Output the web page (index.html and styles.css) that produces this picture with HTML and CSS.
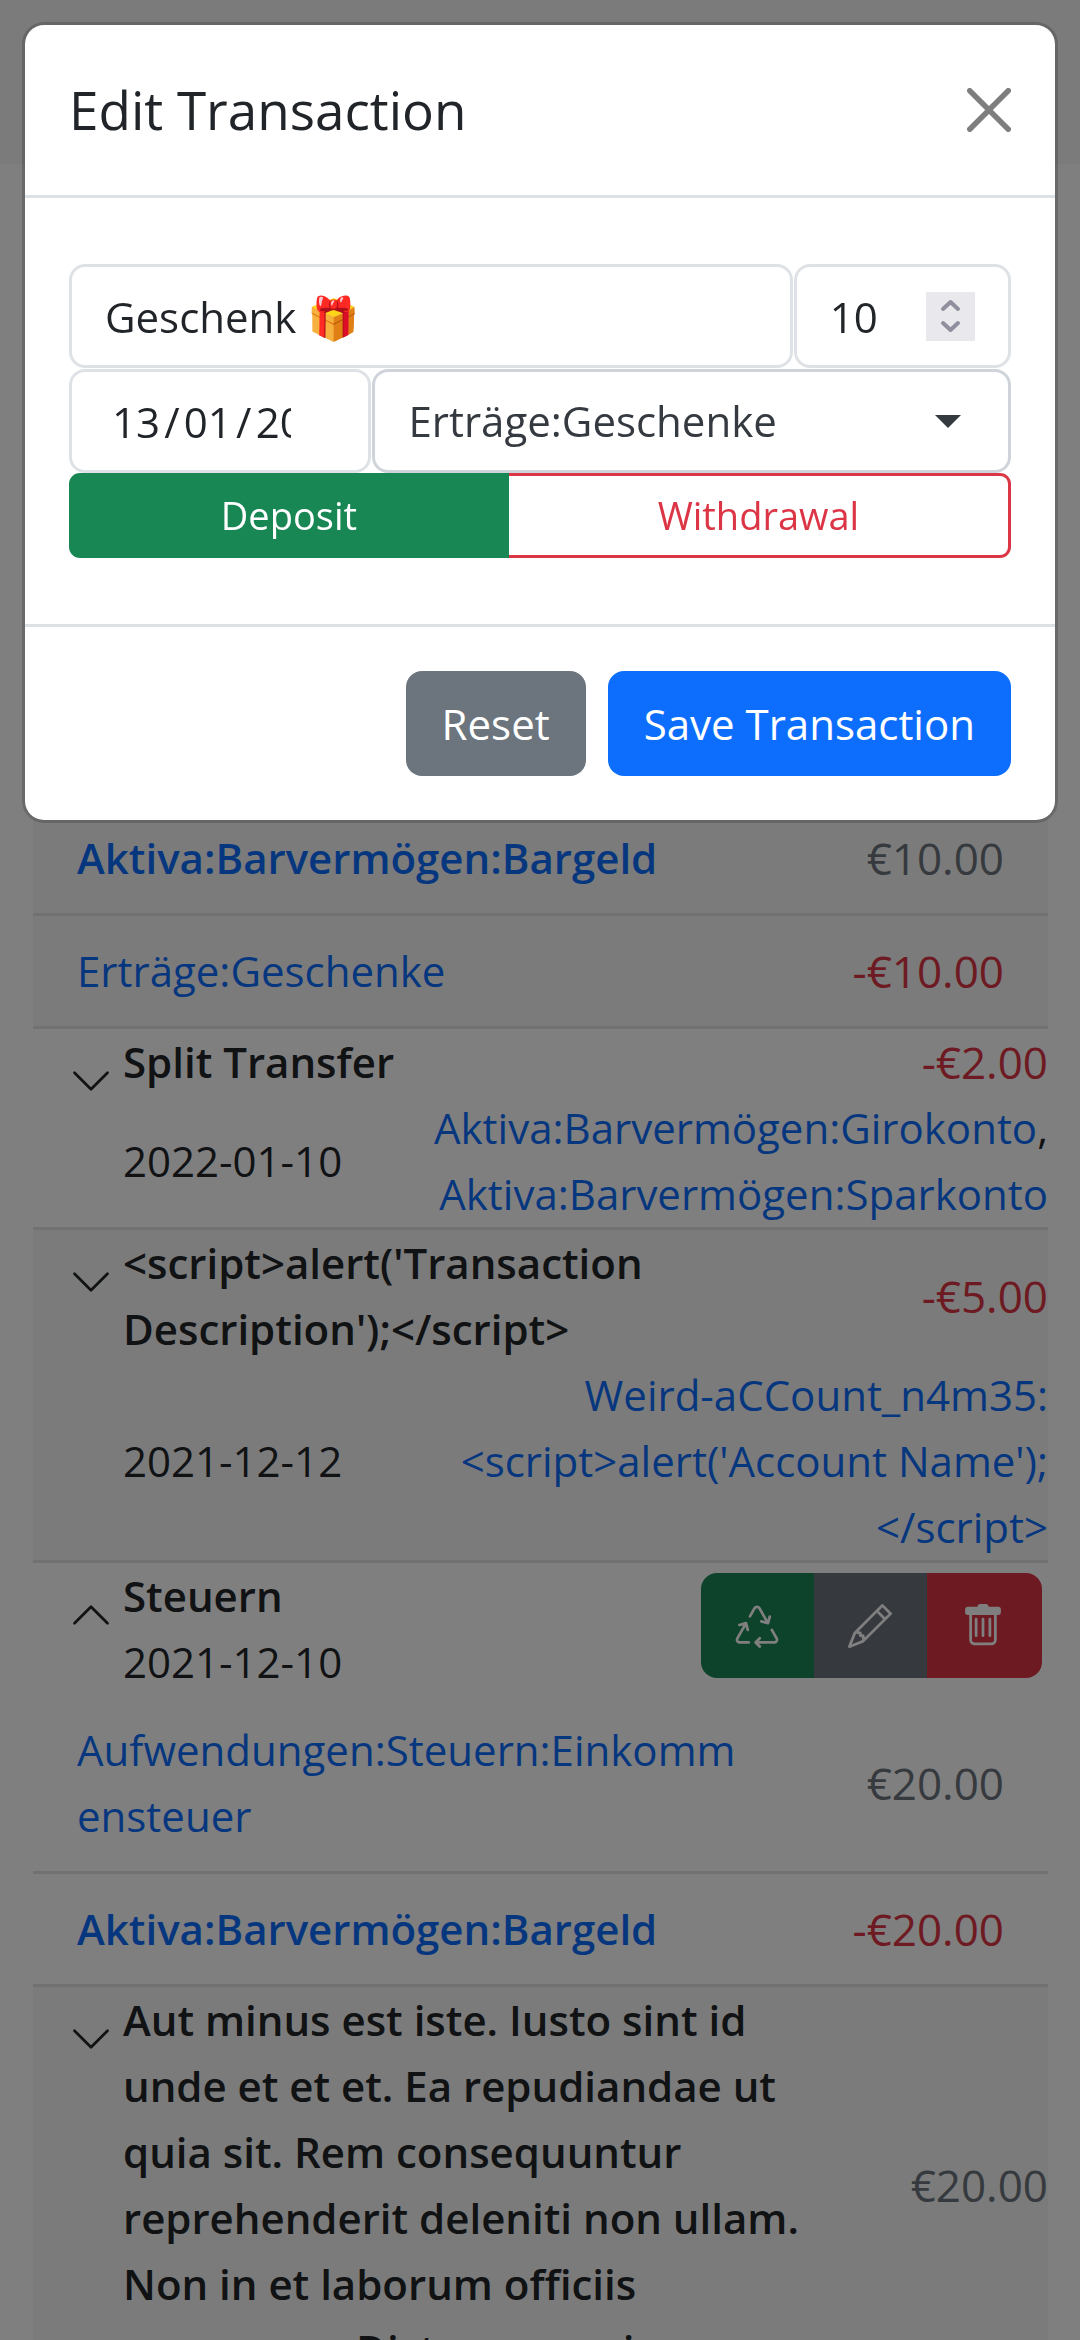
FILE: index.html
```html
<!DOCTYPE html>
<html lang="en">
<head>
<meta charset="utf-8">
<meta name="viewport" content="width=device-width, initial-scale=1">
<title>Edit Transaction</title>
<link rel="stylesheet" href="styles.css">
</head>
<body>
<div class="page">
  <header class="navbar"></header>
  <main class="ledger">
    <section class="entry entry-first">
      <div class="split">
        <a class="account current" href="#">Aktiva:Barvermögen:Bargeld</a>
        <span class="amount">€10.00</span>
      </div>
      <div class="split">
        <a class="account" href="#">Erträge:Geschenke</a>
        <span class="amount negative">-€10.00</span>
      </div>
    </section>

    <section class="entry">
      <div class="summary">
        <button class="toggle" type="button" aria-label="Expand">
          <svg class="icon" viewBox="0 0 16 16"><path d="M2 5l6 6 6-6"/></svg>
        </button>
        <div class="details">
          <div class="headline"><span class="title">Split Transfer</span><span class="amount negative">-€2.00</span></div>
          <div class="subline"><span>2022-01-10</span><span class="targets"><a href="#">Aktiva:Barvermögen:Girokonto</a>, <a href="#">Aktiva:Barvermögen:Sparkonto</a></span></div>
        </div>
      </div>
    </section>

    <section class="entry">
      <div class="summary">
        <button class="toggle" type="button" aria-label="Expand">
          <svg class="icon" viewBox="0 0 16 16"><path d="M2 5l6 6 6-6"/></svg>
        </button>
        <div class="details">
          <div class="headline"><span class="title">&lt;script&gt;alert('Transaction Description');&lt;/script&gt;</span><span class="amount negative">-€5.00</span></div>
          <div class="subline"><span>2021-12-12</span><span class="targets"><a href="#">Weird-aCCount_n4m35:<wbr>&lt;script&gt;alert('Account&nbsp;Name');<wbr>&lt;/script&gt;</a></span></div>
        </div>
      </div>
    </section>

    <section class="entry">
      <div class="summary">
        <button class="toggle" type="button" aria-label="Collapse">
          <svg class="icon" viewBox="0 0 16 16"><path d="M2 11l6-6 6 6"/></svg>
        </button>
        <div class="details opened">
          <div><div class="title">Steuern</div><div>2021-12-10</div></div>
          <div class="actions">
            <button class="action copy" type="button" aria-label="Copy">
              <svg viewBox="0 0 16 16"><path d="M9.302 1.256a1.5 1.5 0 0 0-2.604 0l-1.704 2.98a.5.5 0 0 0 .869.497l1.703-2.981a.5.5 0 0 1 .868 0l2.54 4.444-1.256-.337a.5.5 0 1 0-.26.966l2.415.647a.5.5 0 0 0 .613-.353l.647-2.415a.5.5 0 1 0-.966-.259l-.333 1.242zM2.973 7.773l-1.255.337a.5.5 0 1 1-.26-.966l2.416-.647a.5.5 0 0 1 .612.353l.647 2.415a.5.5 0 0 1-.966.259l-.333-1.242-2.545 4.454a.5.5 0 0 0 .434.748H5a.5.5 0 0 1 0 1H1.723A1.5 1.5 0 0 1 .421 12.24zm10.89 1.463a.5.5 0 1 0-.868.496l1.716 3.004a.5.5 0 0 1-.434.748h-5.57l.647-.646a.5.5 0 1 0-.708-.707l-1.5 1.5a.5.5 0 0 0 0 .707l1.5 1.5a.5.5 0 1 0 .708-.707l-.647-.647h5.57a1.5 1.5 0 0 0 1.302-2.244z"/></svg>
            </button>
            <button class="action edit" type="button" aria-label="Edit">
              <svg viewBox="0 0 16 16"><path d="M12.146.146a.5.5 0 0 1 .708 0l3 3a.5.5 0 0 1 0 .708l-10 10a.5.5 0 0 1-.168.11l-5 2a.5.5 0 0 1-.65-.65l2-5a.5.5 0 0 1 .11-.168zM11.207 2.5 13.5 4.793 14.793 3.5 12.5 1.207zm1.586 3L10.5 3.207 4 9.707V10h.5a.5.5 0 0 1 .5.5v.5h.5a.5.5 0 0 1 .5.5v.5h.293zm-9.761 5.175-.106.106-1.528 3.821 3.821-1.528.106-.106A.5.5 0 0 1 5 12.5V12h-.5a.5.5 0 0 1-.5-.5V11h-.5a.5.5 0 0 1-.468-.325"/></svg>
            </button>
            <button class="action remove" type="button" aria-label="Delete">
              <svg viewBox="0 0 16 16"><path fill-rule="evenodd" d="M2.5 1a1 1 0 0 0-1 1v1a1 1 0 0 0 1 1H3v9a2 2 0 0 0 2 2h6a2 2 0 0 0 2-2V4h.5a1 1 0 0 0 1-1V2a1 1 0 0 0-1-1H10a1 1 0 0 0-1-1H7a1 1 0 0 0-1 1zM4 4v9a1 1 0 0 0 1 1h6a1 1 0 0 0 1-1V4z"/><path d="M5.500 5a.5.5 0 0 1 .5.5v6a.5.5 0 0 1-1 0v-6a.5.5 0 0 1 .5-.5zM8 5a.5.5 0 0 1 .5.5v6a.5.5 0 0 1-1 0v-6A.5.5 0 0 1 8 5zM10.500 5a.5.5 0 0 1 .5.5v6a.5.5 0 0 1-1 0v-6a.5.5 0 0 1 .5-.5z"/></svg>
            </button>
          </div>
        </div>
      </div>
      <div class="split">
        <a class="account" href="#">Aufwendungen:Steuern:Einkommensteuer</a>
        <span class="amount">€20.00</span>
      </div>
      <div class="split">
        <a class="account current" href="#">Aktiva:Barvermögen:Bargeld</a>
        <span class="amount negative">-€20.00</span>
      </div>
    </section>

    <section class="entry">
      <div class="summary">
        <button class="toggle" type="button" aria-label="Expand">
          <svg class="icon" viewBox="0 0 16 16"><path d="M2 5l6 6 6-6"/></svg>
        </button>
        <div class="details">
          <div class="headline"><span class="title">Aut minus est iste. Iusto sint id unde et et et. Ea repudiandae ut quia sit. Rem consequuntur reprehenderit deleniti non ullam. Non in et laborum officiis numquam. Dicta cum qui.</span><span class="amount">€20.00</span></div>
        </div>
      </div>
    </section>
  </main>
</div>

<div class="backdrop">
  <form class="modal" role="dialog" aria-labelledby="modal-title">
    <div class="modal-header">
      <h1 id="modal-title">Edit Transaction</h1>
      <button class="close" type="button" aria-label="Close">
        <svg viewBox="0 0 16 16"><path d="M.293.293a1 1 0 0 1 1.414 0L8 6.586 14.293.293a1 1 0 1 1 1.414 1.414L9.414 8l6.293 6.293a1 1 0 0 1-1.414 1.414L8 9.414l-6.293 6.293a1 1 0 0 1-1.414-1.414L6.586 8 .293 1.707a1 1 0 0 1 0-1.414"/></svg>
      </button>
    </div>
    <div class="modal-body">
      <div class="fields fields-top">
        <input class="field" type="text" aria-label="Description" value="Geschenk 🎁">
        <div class="stack">
          <input class="field number" type="number" aria-label="Amount" value="10">
          <svg class="spinner" viewBox="0 0 49 49"><path d="M17 17l7.500-7 7.500 7M17 31l7.500 7 7.500-7"/></svg>
        </div>
      </div>
      <div class="fields fields-bottom">
        <input class="field date" type="text" aria-label="Date" value="13&#8202;/&#8202;01&#8202;/&#8202;2022">
        <div class="stack">
          <select class="field account-select" aria-label="Account"><option>Erträge:Geschenke</option></select>
          <span class="caret"></span>
        </div>
      </div>
      <div class="kinds">
        <input type="radio" name="kind" id="deposit" checked>
        <label class="kind kind-deposit" for="deposit">Deposit</label>
        <input type="radio" name="kind" id="withdrawal">
        <label class="kind kind-withdrawal" for="withdrawal">Withdrawal</label>
      </div>
    </div>
    <div class="modal-footer">
      <button class="btn btn-reset" type="reset">Reset</button>
      <button class="btn btn-save" type="submit">Save Transaction</button>
    </div>
  </form>
</div>
</body>
</html>
```
FILE: styles.css
```css
* { box-sizing: border-box; }

html { height: 100%; overflow: hidden; }

body {
  margin: 0;
  height: 100%;
  overflow: hidden;
  background: #fff;
  color: #212529;
  font-family: "Open Sans", "Noto Color Emoji", sans-serif;
  font-size: 42px;
  line-height: 66px;
}

button, input, select { font: inherit; color: inherit; margin: 0; }
button { border: 0; cursor: pointer; }
svg { display: block; }
a { color: #0d6efd; text-decoration: none; }

/* Transaction list */
.navbar { height: 164px; background: #f7f7f7; }
.ledger { padding: 507px 32px 0 33px; }
.entry:nth-child(odd) { background: #f7f7f7; }
.entry-first { padding-top: 132px; }
.entry { border-bottom: 3px solid #dee2e6; }

.split {
  display: flex;
  align-items: center;
  justify-content: space-between;
  padding: 22px 44px;
}
.split + .split { border-top: 3px solid #dee2e6; }
.account { flex: 0 1 676px; overflow-wrap: anywhere; }
.current, .title { font-weight: 600; }
.amount { color: #6c757d; font-size: 44px; white-space: nowrap; text-align: right; }
.negative { color: #dc3545; }

.summary { display: flex; align-items: flex-start; padding-left: 36px; }
.toggle { flex: none; margin: 30px 10px 0 0; padding: 0; background: none; color: #212529; }
.icon {
  width: 44px;
  height: 44px;
  fill: none;
  stroke: currentColor;
  stroke-width: 1;
  stroke-linecap: round;
  stroke-linejoin: round;
}
.details { flex: 1; min-width: 0; }
.headline { display: grid; grid-template-columns: 3fr 1fr; align-items: center; }
.subline { display: flex; align-items: center; justify-content: space-between; }
.targets { flex: 0 1 620px; text-align: right; }
.opened { display: flex; justify-content: space-between; align-items: flex-start; }

.actions { display: flex; margin: 10px 6px 0 0; border-radius: 16px; overflow: hidden; }
.action { height: 105px; padding: 0 35px 0 34px; color: #fff; }
.action svg { width: 44px; height: 44px; fill: currentColor; }
.copy { background: #198754; }
.edit { background: #6c757d; }
.remove { background: #dc3545; padding-right: 37px; }

/* Dialog */
.backdrop {
  position: fixed;
  inset: 0;
  padding: 22px;
  background: rgba(0, 0, 0, .5);
}
.modal {
  border: 3px solid rgba(0, 0, 0, .175);
  border-radius: 22px;
  background: #fff;
  background-clip: padding-box;
}
.modal-header {
  display: flex;
  align-items: center;
  justify-content: space-between;
  padding: 44px;
  border-bottom: 3px solid #dee2e6;
}
.modal-header h1 { margin: 0; font-size: 53px; font-weight: 400; line-height: 82px; }
.close { padding: 0; background: none; color: #000; opacity: .5; }
.close svg { width: 44px; height: 44px; fill: currentColor; }

.modal-body { padding: 66px 44px; border-bottom: 3px solid #dee2e6; }
.fields { display: grid; gap: 1px; }
.fields-top { grid-template-columns: 10fr 3fr; }
.fields-bottom { grid-template-columns: 9fr 19fr; padding-top: 1px; }
.field {
  width: 100%;
  min-width: 0;
  height: 104px;
  padding: 0 33px;
  border: 3px solid #dee2e6;
  border-radius: 16px;
  background: #fff;
  appearance: none;
  outline: 0;
}
.stack { display: grid; align-items: center; min-width: 0; }
.stack > * { grid-area: 1 / 1; }
.number { appearance: textfield; }
.spinner {
  justify-self: end;
  width: 49px;
  height: 49px;
  margin-right: 36px;
  background: #e9e9ed;
  fill: none;
  stroke: #8f8f9d;
  stroke-width: 4;
  stroke-linecap: round;
  stroke-linejoin: round;
}
.date { padding: 0 77px 0 40px; }
.account-select { border-color: #ced4da; color: #343a40; }
.caret {
  justify-self: end;
  margin-right: 50px;
  border: 13px solid transparent;
  border-top-color: #343a40;
  border-bottom: 0;
  pointer-events: none;
}

.kinds { display: flex; position: relative; font-size: 38px; line-height: 57px; }
.kinds input { position: absolute; opacity: 0; pointer-events: none; }
.kind { flex: 1 1 auto; padding: 11px 22px; border: 3px solid; text-align: center; }
.kind-deposit { border-color: #198754; border-radius: 11px 0 0 11px; background: #198754; color: #fff; }
.kind-withdrawal { border-color: #dc3545; border-left: 0; border-radius: 0 11px 11px 0; color: #dc3545; }

.modal-footer { display: flex; justify-content: flex-end; gap: 22px; padding: 44px; }
.btn { height: 105px; padding: 0 36px; border-radius: 16px; color: #fff; }
.btn-reset { background: #6c757d; }
.btn-save { background: #0d6efd; }
```
